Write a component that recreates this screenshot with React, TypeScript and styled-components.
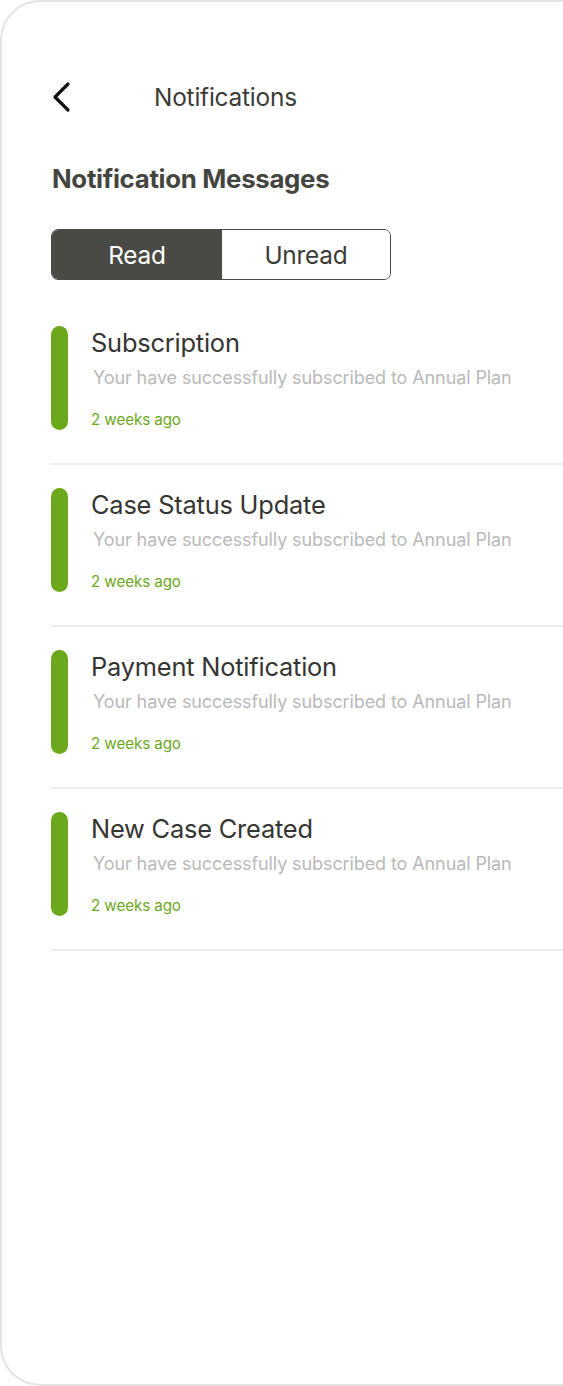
import React from "react";
import styled, { createGlobalStyle } from "styled-components";

const Global = createGlobalStyle`
  html, body { margin: 0; padding: 0; background: #ffffff; overflow: hidden; }
  body { font-family: Inter, "Noto Sans", sans-serif; -webkit-font-smoothing: antialiased; }
  * { box-sizing: border-box; }
`;

const Frame = styled.div`
  width: 563px;
  height: 1386px;
  border: 2px solid #e4e4e4;
  border-right: none;
  border-radius: 40px 0 0 40px;
  background: #fff;
  padding: 77px 0 0 49px;
  display: flex;
  flex-direction: column;
`;

const Header = styled.div`
  display: flex;
  align-items: center;
  height: 36px;
`;

const BackButton = styled.button`
  width: 24px;
  height: 36px;
  padding: 0;
  border: 0;
  background: none;
  display: flex;
  align-items: center;
  justify-content: flex-start;
  cursor: pointer;
`;

const HeaderTitle = styled.h1`
  margin: 0 0 0 79px;
  font-size: 24.4px;
  font-weight: 400;
  color: #3b3b38;
  letter-spacing: -0.2px;
`;

const SectionTitle = styled.h2`
  margin: 48px 0 0 1px;
  font-size: 25.8px;
  font-weight: 700;
  color: #45453f;
  letter-spacing: -0.3px;
  line-height: 32px;
`;

const Toggle = styled.div`
  margin: 34px 0 0 0;
  width: 340px;
  height: 51px;
  display: grid;
  grid-template-columns: 170px 1fr;
  border: 1.5px solid #4a4a44;
  border-radius: 7px;
  overflow: hidden;
`;

const ToggleOption = styled.div<{ $active?: boolean }>`
  display: flex;
  align-items: center;
  justify-content: center;
  font-size: 24.4px;
  font-weight: 400;
  letter-spacing: -0.2px;
  background: ${(p) => (p.$active ? "#4a4a44" : "#ffffff")};
  color: ${(p) => (p.$active ? "#ffffff" : "#3b3b38")};
`;

const List = styled.div`
  margin-top: 46px;
  display: flex;
  flex-direction: column;
`;

const Item = styled.div`
  display: flex;
  gap: 23px;
  padding: 0 0 33px 0;
  border-bottom: 2px solid #ececec;
  margin-bottom: 23px;
`;

const Bar = styled.div`
  width: 17px;
  height: 104px;
  border-radius: 9px;
  background: #6ba81c;
  flex-shrink: 0;
`;

const Body = styled.div`
  display: flex;
  flex-direction: column;
  padding-top: 1px;
`;

const ItemTitle = styled.div`
  font-size: 25.4px;
  color: #353532;
  line-height: 32px;
  letter-spacing: -0.2px;
`;

const ItemText = styled.div`
  font-size: 18px;
  color: #b9b9b9;
  line-height: 26px;
  margin: 6px 0 0 2px;
  letter-spacing: -0.1px;
`;

const ItemTime = styled.div`
  font-size: 15.2px;
  color: #6ba81c;
  line-height: 20px;
  margin-top: 19px;
  letter-spacing: -0.1px;
`;

const items = [
  "Subscription",
  "Case Status Update",
  "Payment Notification",
  "New Case Created",
];

export default function App() {
  return (
    <>
      <Global />
      <Frame>
        <Header>
          <BackButton aria-label="Back">
            <svg width="22" height="32" viewBox="0 0 22 32" fill="none">
              <path d="M17 3 L4 16 L17 29" stroke="#111" strokeWidth="3.2" strokeLinecap="round" strokeLinejoin="round" />
            </svg>
          </BackButton>
          <HeaderTitle>Notifications</HeaderTitle>
        </Header>
        <SectionTitle>Notification Messages</SectionTitle>
        <Toggle>
          <ToggleOption $active>Read</ToggleOption>
          <ToggleOption>Unread</ToggleOption>
        </Toggle>
        <List>
          {items.map((t) => (
            <Item key={t}>
              <Bar />
              <Body>
                <ItemTitle>{t}</ItemTitle>
                <ItemText>Your have successfully subscribed to Annual Plan</ItemText>
                <ItemTime>2 weeks ago</ItemTime>
              </Body>
            </Item>
          ))}
        </List>
      </Frame>
    </>
  );
}
